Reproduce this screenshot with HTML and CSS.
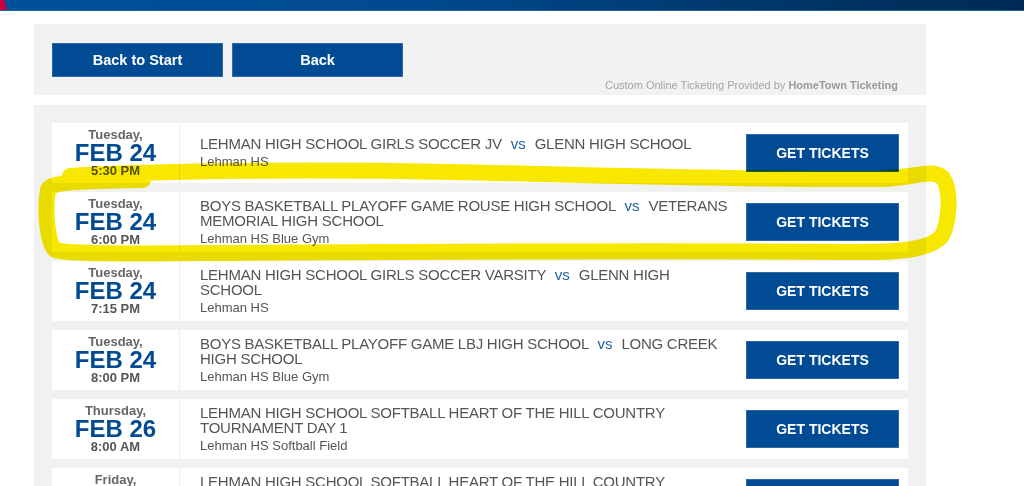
FILE: index.html
```html
<!DOCTYPE html>
<html>
<head>
<meta charset="utf-8">
<link rel="stylesheet" href="styles.css">
</head>
<body>
<div class="topbar"><span class="redtab"></span></div>
<div class="page">
  <div class="panel nav-panel">
    <div class="nav-buttons">
      <a class="btn nav-btn">Back to Start</a>
      <a class="btn nav-btn">Back</a>
    </div>
    <div class="credit">Custom Online Ticketing Provided by <b>HomeTown Ticketing</b></div>
  </div>
  <div class="panel events">
    <div class="event">
      <div class="date"><div class="dow">Tuesday,</div><div class="md">FEB 24</div><div class="time">5:30 PM</div></div>
      <div class="info"><div class="title">LEHMAN HIGH SCHOOL GIRLS SOCCER JV <span class="vs">vs</span> GLENN HIGH SCHOOL</div><div class="venue">Lehman HS</div></div>
      <a class="btn tix">GET TICKETS</a>
    </div>
    <div class="event">
      <div class="date"><div class="dow">Tuesday,</div><div class="md">FEB 24</div><div class="time">6:00 PM</div></div>
      <div class="info"><div class="title">BOYS BASKETBALL PLAYOFF GAME ROUSE HIGH SCHOOL <span class="vs">vs</span> VETERANS MEMORIAL HIGH SCHOOL</div><div class="venue">Lehman HS Blue Gym</div></div>
      <a class="btn tix">GET TICKETS</a>
    </div>
    <div class="event">
      <div class="date"><div class="dow">Tuesday,</div><div class="md">FEB 24</div><div class="time">7:15 PM</div></div>
      <div class="info"><div class="title">LEHMAN HIGH SCHOOL GIRLS SOCCER VARSITY <span class="vs">vs</span> GLENN HIGH SCHOOL</div><div class="venue">Lehman HS</div></div>
      <a class="btn tix">GET TICKETS</a>
    </div>
    <div class="event">
      <div class="date"><div class="dow">Tuesday,</div><div class="md">FEB 24</div><div class="time">8:00 PM</div></div>
      <div class="info"><div class="title">BOYS BASKETBALL PLAYOFF GAME LBJ HIGH SCHOOL <span class="vs">vs</span> LONG CREEK HIGH SCHOOL</div><div class="venue">Lehman HS Blue Gym</div></div>
      <a class="btn tix">GET TICKETS</a>
    </div>
    <div class="event">
      <div class="date"><div class="dow">Thursday,</div><div class="md">FEB 26</div><div class="time">8:00 AM</div></div>
      <div class="info"><div class="title">LEHMAN HIGH SCHOOL SOFTBALL HEART OF THE HILL COUNTRY TOURNAMENT DAY 1</div><div class="venue">Lehman HS Softball Field</div></div>
      <a class="btn tix">GET TICKETS</a>
    </div>
    <div class="event">
      <div class="date"><div class="dow">Friday,</div><div class="md">FEB 27</div><div class="time">8:00 AM</div></div>
      <div class="info"><div class="title">LEHMAN HIGH SCHOOL SOFTBALL HEART OF THE HILL COUNTRY TOURNAMENT DAY 2</div><div class="venue">Lehman HS Softball Field</div></div>
      <a class="btn tix">GET TICKETS</a>
    </div>
  </div>
</div>
<svg class="marker" width="1024" height="486" viewBox="0 0 1024 486">
  <path d="M 70 176 C 150 171, 300 169, 450 172 C 600 175, 750 180, 880 179 C 915 178, 932 168, 943 178 C 952 192, 949 222, 942 236 C 930 250, 900 252, 860 252 C 650 250, 350 252, 200 253 C 120 254, 70 254, 55 250 C 46 240, 45 205, 48 190 C 50 182, 80 181, 143 180" fill="none" stroke="#f8e800" stroke-width="16" stroke-linecap="round" stroke-linejoin="round"/>
</svg>
</body>
</html>
```

FILE: styles.css
```css
html, body {
  margin: 0;
  padding: 0;
  background: #ffffff;
  font-family: "Liberation Sans", Arial, sans-serif;
  overflow: hidden;
}

.topbar {
  position: relative;
  height: 10px;
  background: linear-gradient(to right, #00509c 0%, #004a8f 40%, #003464 80%, #002a55 100%);
  border-bottom: 1px solid #1e63a6;
}

.redtab {
  position: absolute;
  left: 0;
  top: 0;
  width: 7px;
  height: 10px;
  background: #c8003c;
  clip-path: polygon(0 0, 60% 0, 100% 100%, 0 100%);
}

.page {
  width: 892px;
  margin: 13px 0 0 34px;
  display: flex;
  flex-direction: column;
  gap: 10px;
}

.panel {
  box-sizing: border-box;
}

.nav-panel {
  background: #f2f2f2;
  padding: 19px 28px 4px 18px;
  height: 71px;
}

.nav-buttons {
  display: flex;
  gap: 9px;
}

.btn {
  box-sizing: border-box;
  background: #004b93;
  border: 1px solid #2e6aa8;
  color: #ffffff;
  font-weight: bold;
  display: flex;
  align-items: center;
  justify-content: center;
  text-decoration: none;
}

.nav-btn {
  width: 171px;
  height: 34px;
  font-size: 14.5px;
}

.credit {
  text-align: right;
  font-size: 11px;
  color: #a4a4a4;
  margin-top: 2px;
  line-height: 12px;
}

.credit b {
  color: #999999;
}

.events {
  background: #f0f1f1;
  padding: 18px;
  display: flex;
  flex-direction: column;
  gap: 9px;
}

.event {
  background: #ffffff;
  height: 60px;
  display: flex;
  align-items: center;
}

.date {
  width: 127px;
  height: 100%;
  border-right: 1px solid #ececec;
  display: flex;
  flex-direction: column;
  align-items: center;
  justify-content: center;
  flex: none;
}

.dow {
  font-size: 13px;
  font-weight: bold;
  color: #666666;
  line-height: 16px;
}

.md {
  font-size: 24px;
  font-weight: bold;
  color: #004b93;
  line-height: 22px;
  margin-top: -1px;
}

.time {
  font-size: 13px;
  font-weight: bold;
  color: #555555;
  line-height: 16px;
  margin-top: -1px;
}

.info {
  flex: 1;
  padding-left: 20px;
  padding-right: 16px;
}

.title {
  font-size: 15px;
  letter-spacing: -0.25px;
  line-height: 15px;
  color: #555555;
  text-transform: uppercase;
}

.vs {
  color: #1f5e9f;
  font-size: 15px;
  letter-spacing: 0;
  text-transform: none;
  margin: 0 5px;
}

.venue {
  font-size: 13px;
  color: #555555;
  line-height: 16px;
  margin-top: 3px;
}

.tix {
  width: 153px;
  height: 38px;
  font-size: 14px;
  margin-right: 9px;
  flex: none;
}

.marker {
  position: absolute;
  left: 0;
  top: 0;
  pointer-events: none;
  mix-blend-mode: multiply;
}
```
